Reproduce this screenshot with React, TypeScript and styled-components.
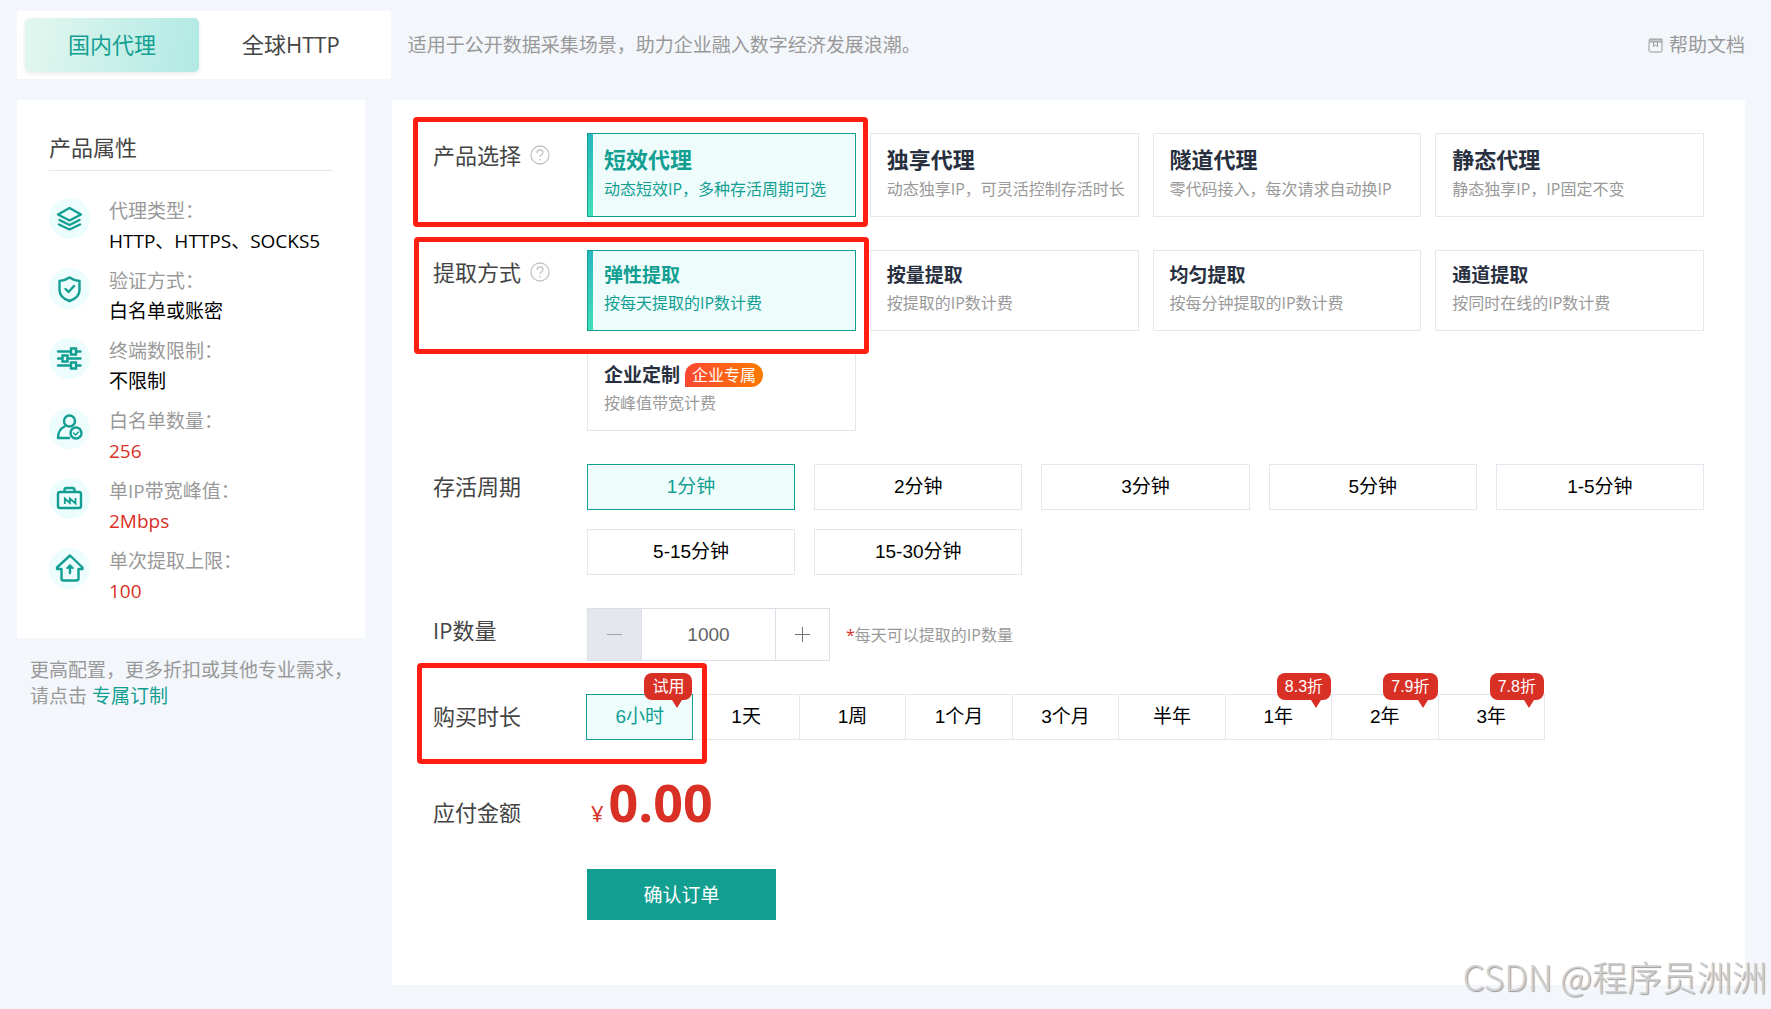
import React, { useState } from "react";
import styled, { createGlobalStyle, css } from "styled-components";

const teal = "#129f92";
const tealSoft = "#eefcfc";
const line = "#e4e7ed";
const red = "#d93026";
const muted = "#999";
const uiFont = `"Open Sans", "Noto Sans CJK SC", sans-serif`;
const controlFont = `"Liberation Sans", "Noto Sans CJK SC", sans-serif`;

const GlobalStyle = createGlobalStyle`
  *, *::before, *::after { box-sizing: border-box; }
  body {
    margin: 0;
    background: #f3f6fb;
    color: #000;
    font-family: ${uiFont};
    font-size: 19px;
  }
  button, input { font: inherit; color: inherit; margin: 0; border-radius: 0; }
  button { cursor: pointer; }
  h2, p, ul { margin: 0; padding: 0; }
`;

const Page = styled.div`
  position: relative;
  min-height: 100vh;
  padding: 11px 26px 24px 17px;
`;

const Header = styled.header`
  display: flex;
  align-items: center;
  gap: 17px;
  margin-bottom: 21px;
`;

const Tabs = styled.nav`
  display: flex;
  padding: 7px 8px;
  background: #fff;
`;

const Tab = styled.button<{ $active?: boolean }>`
  height: 54px;
  padding: 0 43px 2px;
  border: 0;
  background: transparent;
  color: #444;
  font-size: 22px;
  line-height: 30px;
  white-space: nowrap;
  ${(p) =>
    p.$active &&
    css`
      border-radius: 5px;
      background: linear-gradient(100deg, #e3f7ef, #b1e9e4);
      box-shadow: 0 2px 4px rgba(0, 0, 0, 0.08);
      color: ${teal};
    `}
`;

const Tagline = styled.p`
  flex: 1;
  color: ${muted};
  line-height: 26px;
`;

const HelpLink = styled.a`
  display: flex;
  align-items: center;
  gap: 6px;
  color: ${muted};
  line-height: 26px;
  text-decoration: none;
`;

const Columns = styled.div`
  display: flex;
  align-items: flex-start;
  gap: 27px;
`;

const Sidebar = styled.aside`
  flex: 0 0 348px;
`;

const AttributeCard = styled.section`
  padding: 32px;
  background: #fff;
`;

const AttributeTitle = styled.h2`
  padding-bottom: 8px;
  margin-bottom: 25px;
  border-bottom: 1px solid ${line};
  color: #444;
  font-size: 22px;
  font-weight: 400;
  line-height: 30px;
`;

const AttributeList = styled.ul`
  display: grid;
  gap: 10px;
  list-style: none;
`;

const Attribute = styled.li`
  display: flex;
  align-items: flex-start;
  gap: 19px;
  line-height: 30px;
`;

const AttributeIcon = styled.svg`
  flex: none;
  width: 41px;
  height: 41px;
  margin-top: 2px;
  fill: none;
  stroke: ${teal};
  stroke-width: 2.4;
  stroke-linejoin: round;
  stroke-linecap: round;
`;

const AttributeLabel = styled.div`
  color: ${muted};
`;

const AttributeValue = styled.div<{ $accent?: boolean }>`
  color: ${(p) => (p.$accent ? red : "#000")};
`;

const SideNote = styled.p`
  padding: 19px 0 0 13px;
  color: ${muted};
  line-height: 26px;
  a {
    color: ${teal};
    text-decoration: none;
  }
`;

const OrderPanel = styled.main`
  flex: 1;
  min-width: 0;
  display: grid;
  gap: 33px;
  padding: 33px 41px 65px;
  background: #fff;
`;

const Row = styled.section<{ $end?: boolean }>`
  position: relative;
  display: grid;
  grid-template-columns: 154px minmax(0, 1fr);
  align-items: ${(p) => (p.$end ? "end" : "start")};
`;

const RowLabel = styled.div`
  display: flex;
  align-items: center;
  gap: 9px;
  height: 46px;
  padding-bottom: 2px;
  color: #444;
  font-size: 22px;
  line-height: 44px;
  white-space: nowrap;
`;

const CardGrid = styled.div`
  display: grid;
  grid-template-columns: repeat(4, minmax(0, 1fr));
  gap: 19px 14px;
`;

const CardTitle = styled.span`
  display: flex;
  align-items: center;
  gap: 5px;
  color: #28303f;
  font-weight: 700;
`;

const CardText = styled.span`
  display: block;
  color: ${muted};
  font-size: 16px;
  white-space: nowrap;
`;

const Card = styled.button<{ $active?: boolean; $large?: boolean }>`
  position: relative;
  padding: ${(p) => (p.$large ? "11px 16px" : "10px 16px 13px")};
  border: 1px solid ${line};
  background: #fff;
  font-size: ${(p) => (p.$large ? "22px" : "19px")};
  line-height: 28px;
  text-align: left;
  ${CardText} {
    line-height: ${(p) => (p.$large ? "32px" : "28px")};
  }
  ${(p) =>
    p.$active &&
    css`
      border-color: ${teal};
      background: linear-gradient(#29b5bf, #43dfb9) left / 5px 100% no-repeat ${tealSoft};
      ${CardTitle}, ${CardText} {
        color: ${teal};
      }
    `}
`;

const CardTag = styled.span`
  padding: 0 7px;
  border-radius: 12px 12px 12px 0;
  background: linear-gradient(90deg, #fc4632, #ff7b00);
  color: #fff;
  font-size: 16px;
  font-weight: 400;
  line-height: 24px;
`;

const ChipGrid = styled.div`
  display: grid;
  grid-template-columns: repeat(5, minmax(0, 1fr));
  gap: 19px;
`;

const Chip = styled.button<{ $active?: boolean }>`
  position: relative;
  height: 46px;
  padding: 0;
  border: 1px solid ${(p) => (p.$active ? teal : line)};
  background: ${(p) => (p.$active ? tealSoft : "#fff")};
  color: ${(p) => (p.$active ? teal : "#000")};
  font-family: ${controlFont};
  line-height: 26px;
  z-index: ${(p) => (p.$active ? 1 : 0)};
`;

const DurationGroup = styled.div`
  display: flex;
  max-width: 958px;
  ${Chip} {
    flex: 1;
    margin-left: -1px;
  }
`;

const DiscountBadge = styled.span`
  position: absolute;
  top: -22px;
  right: 0;
  padding: 0 8px;
  border-radius: 8px;
  background: ${red};
  color: #fff;
  font-size: 16px;
  line-height: 27px;
  white-space: nowrap;
  &::after {
    content: "";
    position: absolute;
    top: 100%;
    right: 10px;
    border: 5px solid transparent;
    border-top: 8px solid ${red};
    border-bottom: 0;
  }
`;

const QuantityLine = styled.div`
  display: flex;
  align-items: center;
  gap: 16px;
`;

const Stepper = styled.div`
  display: flex;
  height: 53px;
  width: 243px;
  border: 1px solid #dcdfe6;
  color: #606266;
  font-family: ${controlFont};
  input {
    flex: 1;
    min-width: 0;
    padding: 0;
    border: 0;
    background: none;
    text-align: center;
    outline: none;
  }
`;

const StepButton = styled.button<{ $disabled?: boolean }>`
  display: flex;
  align-items: center;
  justify-content: center;
  width: 54px;
  padding: 0;
  border: 0 solid #dcdfe6;
  border-width: ${(p) => (p.$disabled ? "0 1px 0 0" : "0 0 0 1px")};
  background: ${(p) => (p.$disabled ? "#e4e7ed" : "#fff")};
  color: ${(p) => (p.$disabled ? "#a0a3a8" : "#707378")};
`;

const Hint = styled.span`
  color: ${muted};
  font-size: 16px;
  line-height: 24px;
  em {
    color: ${red};
    font-style: normal;
  }
`;

const Price = styled.div`
  display: flex;
  align-items: baseline;
  gap: 5px;
  height: 63px;
  padding-left: 4px;
  color: ${red};
  font-size: 22px;
  line-height: 58px;
  strong {
    font-size: 52px;
    font-weight: 700;
  }
`;

const SubmitButton = styled.button`
  grid-column: 2;
  justify-self: start;
  width: 189px;
  height: 51px;
  padding: 0 0 2px;
  border: 0;
  background: ${teal};
  color: #fff;
`;

const Marker = styled.div<{ $left: number; $top: number; $width: number; $height: number }>`
  position: absolute;
  left: ${(p) => p.$left}px;
  top: ${(p) => p.$top}px;
  width: ${(p) => p.$width}px;
  height: ${(p) => p.$height}px;
  border: 5px solid #ff1f12;
  border-radius: 4px;
  pointer-events: none;
  z-index: 2;
`;

const Watermark = styled.div`
  position: absolute;
  right: 4px;
  bottom: 8px;
  color: #d0d0d0;
  font-family: "Noto Sans CJK SC", sans-serif;
  font-size: 35px;
  font-weight: 300;
  line-height: 50px;
  text-shadow: 1px 1px 1px #999;
  white-space: nowrap;
  pointer-events: none;
`;

const attributes = [
  {
    label: "代理类型：",
    value: "HTTP、HTTPS、SOCKS5",
    icon: (
      <>
        <path d="M20.5 10 32 16.500 20.500 22.500 9 16.500Z" />
        <path d="M10.500 22 20.500 27 30.500 22" />
        <path d="M10 26.500 20.500 31.500 31 26.500" />
      </>
    ),
  },
  {
    label: "验证方式：",
    value: "白名单或账密",
    icon: (
      <>
        <path d="M20.500 9.500C17 12 14 12.500 10.500 13V22C10.500 27 14.500 31 20.500 33C26.500 31 30.500 27 30.500 22V13C27 12.500 24 12 20.500 9.500Z" />
        <path d="M16.500 21 19.500 24 25 18" />
      </>
    ),
  },
  {
    label: "终端数限制：",
    value: "不限制",
    icon: (
      <>
        <path d="M9 13.500H22M27 13.500H31.500M9 20.500H13M18.500 20.500H31.500M9 27.500H22M27 27.500H31.500" />
        <path strokeLinejoin="miter" d="M22 10.500H27V16.500H22ZM13.500 17.500H18.500V23.500H13.500ZM22 24.500H27V30.500H22Z" />
      </>
    ),
  },
  {
    label: "白名单数量：",
    value: "256",
    accent: true,
    icon: (
      <>
        <circle cx="20.500" cy="13" r="5.500" />
        <path d="M15.500 18.500C11.500 20.500 9 24.500 9 30H20" />
        <circle cx="27" cy="25" r="5.500" />
        <path strokeWidth="1.500" d="M24.500 25 26.500 27 29.500 24" />
      </>
    ),
  },
  {
    label: "单IP带宽峰值：",
    value: "2Mbps",
    accent: true,
    icon: (
      <>
        <rect x="9" y="14" width="23" height="16" rx="2" />
        <path d="M15.500 13.500V12Q15.500 10 17.500 10H23.500Q25.500 10 25.500 12V13.500" />
        <path strokeWidth="1.800" strokeLinejoin="miter" strokeLinecap="butt" d="M15.800 26V20.500L20.800 25V20.500L26.500 25.500V20" />
      </>
    ),
  },
  {
    label: "单次提取上限：",
    value: "100",
    accent: true,
    icon: (
      <>
        <path d="M21 7.500 33.500 19.500V21H29.500V30.500Q29.500 32.500 27.500 32.500H14.500Q12.500 32.500 12.500 30.500V21H8V19.500Z" />
        <path d="M21 25V17.500M18.500 20 21 17.500 23.500 20" />
      </>
    ),
  },
];

const products = [
  { title: "短效代理", text: "动态短效IP，多种存活周期可选" },
  { title: "独享代理", text: "动态独享IP，可灵活控制存活时长" },
  { title: "隧道代理", text: "零代码接入，每次请求自动换IP" },
  { title: "静态代理", text: "静态独享IP，IP固定不变" },
];

const methods = [
  { title: "弹性提取", text: "按每天提取的IP数计费" },
  { title: "按量提取", text: "按提取的IP数计费" },
  { title: "均匀提取", text: "按每分钟提取的IP数计费" },
  { title: "通道提取", text: "按同时在线的IP数计费" },
  { title: "企业定制", text: "按峰值带宽计费", tag: "企业专属" },
];

const lifetimes = ["1分钟", "2分钟", "3分钟", "5分钟", "1-5分钟", "5-15分钟", "15-30分钟"];

const durations = [
  { name: "6小时", badge: "试用" },
  { name: "1天" },
  { name: "1周" },
  { name: "1个月" },
  { name: "3个月" },
  { name: "半年" },
  { name: "1年", badge: "8.3折" },
  { name: "2年", badge: "7.9折" },
  { name: "3年", badge: "7.8折" },
];

function QuestionIcon() {
  return (
    <svg width="20" height="20" viewBox="0 0 20 20" fill="none" stroke="#c3c3c3" strokeWidth="1.300" aria-hidden="true">
      <circle cx="10" cy="10" r="9" />
      <path d="M7 8Q7 5 10 5T13 7.800C13 9.800 10 9.800 10 12.200" />
      <path d="M10 14V15.600" />
    </svg>
  );
}

function DocIcon() {
  return (
    <svg width="15" height="15" viewBox="0 0 15 15" fill="none" stroke="#999" aria-hidden="true">
      <path d="M1 4V12.500Q1 14 2.500 14H12.500Q14 14 14 12.500V4" />
      <path d="M14 1H2.500Q1 1 1 2.500T2.500 4H14Z" fill="#c4c6c9" />
      <path d="M5.500 4V8.500L7.500 7L9.500 8.500V4" />
    </svg>
  );
}

export default function App() {
  const [product, setProduct] = useState(0);
  const [method, setMethod] = useState(0);
  const [lifetime, setLifetime] = useState(0);
  const [duration, setDuration] = useState(0);
  const [quantity, setQuantity] = useState(1000);

  return (
    <>
      <GlobalStyle />
      <Page>
        <Header>
          <Tabs>
            <Tab $active>国内代理</Tab>
            <Tab>全球HTTP</Tab>
          </Tabs>
          <Tagline>适用于公开数据采集场景，助力企业融入数字经济发展浪潮。</Tagline>
          <HelpLink href="#help">
            <DocIcon />
            帮助文档
          </HelpLink>
        </Header>

        <Columns>
          <Sidebar>
            <AttributeCard>
              <AttributeTitle>产品属性</AttributeTitle>
              <AttributeList>
                {attributes.map((item) => (
                  <Attribute key={item.label}>
                    <AttributeIcon viewBox="0 0 41 41" aria-hidden="true">
                      <circle cx="20.500" cy="20.500" r="20.500" fill="#edfcfd" stroke="none" />
                      {item.icon}
                    </AttributeIcon>
                    <div>
                      <AttributeLabel>{item.label}</AttributeLabel>
                      <AttributeValue $accent={item.accent}>{item.value}</AttributeValue>
                    </div>
                  </Attribute>
                ))}
              </AttributeList>
            </AttributeCard>
            <SideNote>
              更高配置，更多折扣或其他专业需求，
              <br />
              请点击 <a href="#custom">专属订制</a>
            </SideNote>
          </Sidebar>

          <OrderPanel>
            <Row>
              <RowLabel>
                产品选择
                <QuestionIcon />
              </RowLabel>
              <CardGrid>
                {products.map((item, i) => (
                  <Card key={item.title} $large $active={i === product} aria-pressed={i === product} onClick={() => setProduct(i)}>
                    <CardTitle>{item.title}</CardTitle>
                    <CardText>{item.text}</CardText>
                  </Card>
                ))}
              </CardGrid>
              <Marker $left={-20} $top={-16} $width={455} $height={110} />
            </Row>

            <Row>
              <RowLabel>
                提取方式
                <QuestionIcon />
              </RowLabel>
              <CardGrid>
                {methods.map((item, i) => (
                  <Card key={item.title} $active={i === method} aria-pressed={i === method} onClick={() => setMethod(i)}>
                    <CardTitle>
                      {item.title}
                      {item.tag && <CardTag>{item.tag}</CardTag>}
                    </CardTitle>
                    <CardText>{item.text}</CardText>
                  </Card>
                ))}
              </CardGrid>
              <Marker $left={-19} $top={-13} $width={455} $height={117} />
            </Row>

            <Row>
              <RowLabel>存活周期</RowLabel>
              <ChipGrid>
                {lifetimes.map((name, i) => (
                  <Chip key={name} $active={i === lifetime} aria-pressed={i === lifetime} onClick={() => setLifetime(i)}>
                    {name}
                  </Chip>
                ))}
              </ChipGrid>
            </Row>

            <Row>
              <RowLabel as="label" htmlFor="quantity">
                IP数量
              </RowLabel>
              <QuantityLine>
                <Stepper>
                  <StepButton $disabled aria-label="减少" onClick={() => setQuantity(Math.max(1000, quantity - 1))}>
                    <svg width="15" height="15" viewBox="0 0 15 15" stroke="currentColor" aria-hidden="true">
                      <path d="M0 7.500H15" />
                    </svg>
                  </StepButton>
                  <input id="quantity" value={quantity} onChange={(e) => setQuantity(Number(e.target.value) || 0)} />
                  <StepButton aria-label="增加" onClick={() => setQuantity(quantity + 1)}>
                    <svg width="15" height="15" viewBox="0 0 15 15" stroke="currentColor" aria-hidden="true">
                      <path d="M0 7.500H15M7.500 0V15" />
                    </svg>
                  </StepButton>
                </Stepper>
                <Hint>
                  <em>*</em>每天可以提取的IP数量
                </Hint>
              </QuantityLine>
            </Row>

            <Row>
              <RowLabel>购买时长</RowLabel>
              <DurationGroup>
                {durations.map((item, i) => (
                  <Chip key={item.name} $active={i === duration} aria-pressed={i === duration} onClick={() => setDuration(i)}>
                    {item.name}
                    {item.badge && <DiscountBadge>{item.badge}</DiscountBadge>}
                  </Chip>
                ))}
              </DurationGroup>
              <Marker $left={-16} $top={-31} $width={290} $height={101} />
            </Row>

            <Row $end>
              <RowLabel>应付金额</RowLabel>
              <Price>
                <span>¥</span>
                <strong>0.00</strong>
              </Price>
            </Row>

            <Row>
              <SubmitButton>确认订单</SubmitButton>
            </Row>
          </OrderPanel>
        </Columns>
        <Watermark>CSDN @程序员洲洲</Watermark>
      </Page>
    </>
  );
}
